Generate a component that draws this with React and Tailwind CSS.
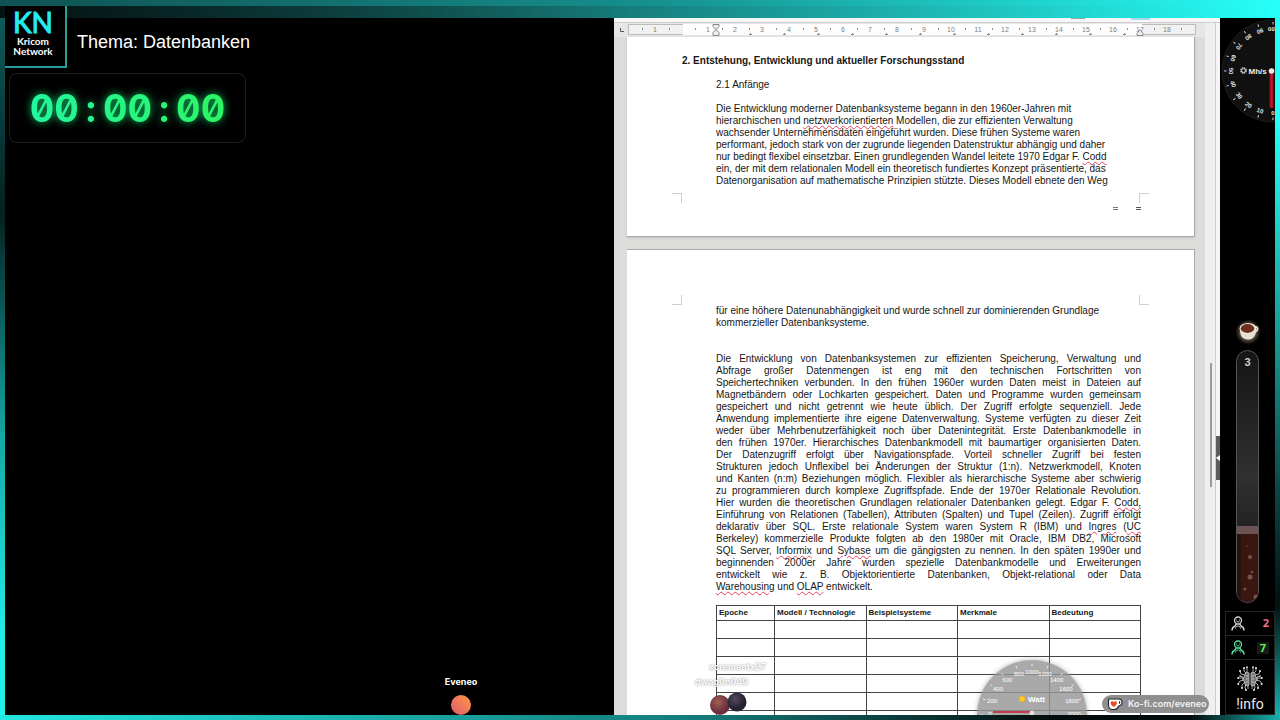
import React from "react";

const sans = "font-['Liberation_Sans',Arial,sans-serif]";

function Wavy({ children }) {
  return (
    <span className="underline decoration-[#e0405a] decoration-wavy decoration-1 underline-offset-1">{children}</span>
  );
}

function Ruler() {
  const numbers = Array.from({ length: 18 }, (_, i) => i + 1);
  const halves = Array.from({ length: 19 }, (_, i) => i);
  const tabs = Array.from({ length: 12 }, (_, i) => i + 1);
  return (
    <svg width="568" height="13" viewBox="0 0 568 13" className="block shrink-0" role="img" aria-label="Lineal">
      <rect x="0.5" y="1.5" width="567" height="10" fill="#f1f1f1" stroke="#bcbcbc" />
      <rect x="55" y="1" width="459" height="11" fill="#fdfdfd" />
      <g fill="#808080" fontFamily="Liberation Sans, sans-serif" fontSize="7" textAnchor="middle">
        <text x="27" y="9">1</text>
        {numbers.map((n) => (
          <text key={n} x={53 + n * 27} y="9">{n}</text>
        ))}
      </g>
      <g fill="#8c8c8c">
        <rect x="14" y="5" width="1" height="2" />
        <rect x="41" y="5" width="1" height="2" />
        {halves.map((n) => (
          <rect key={n} x={67 + n * 27} y="5" width="1" height="2" />
        ))}
        {tabs.map((n) => (
          <path key={n} d={`M${88 + n * 34 - 1} 12h3v-1h-1v-1h-1v1h-1z`} />
        ))}
      </g>
      <g fill="#eee" stroke="#888" strokeWidth="1">
        <path d="M85 1.5h6v2l-3 3-3-3zM85 12.500v-3l3-3 3 3v3z" />
        <path d="M509 12.500v-2l3-4 3 4v2z" />
      </g>
    </svg>
  );
}

const introLines = [
  "Die Entwicklung moderner Datenbanksysteme begann in den 1960er-Jahren mit",
  <>hierarchischen und <Wavy>netzwerkorientierten</Wavy> Modellen, die zur effizienten Verwaltung</>,
  "wachsender Unternehmensdaten eingeführt wurden. Diese frühen Systeme waren",
  "performant, jedoch stark von der zugrunde liegenden Datenstruktur abhängig und daher",
  <>nur bedingt flexibel einsetzbar. Einen grundlegenden Wandel leitete 1970 Edgar F. <Wavy>Codd</Wavy></>,
  "ein, der mit dem relationalen Modell ein theoretisch fundiertes Konzept präsentierte, das",
  "Datenorganisation auf mathematische Prinzipien stützte. Dieses Modell ebnete den Weg",
];

const bodyLines = [
  "Die Entwicklung von Datenbanksystemen zur effizienten Speicherung, Verwaltung und",
  "Abfrage großer Datenmengen ist eng mit den technischen Fortschritten von",
  "Speichertechniken verbunden. In den frühen 1960er wurden Daten meist in Dateien auf",
  "Magnetbändern oder Lochkarten gespeichert. Daten und Programme wurden gemeinsam",
  "gespeichert und nicht getrennt wie heute üblich. Der Zugriff erfolgte sequenziell. Jede",
  "Anwendung implementierte ihre eigene Datenverwaltung. Systeme verfügten zu dieser Zeit",
  "weder über Mehrbenutzerfähigkeit noch über Datenintegrität. Erste Datenbankmodelle in",
  "den frühen 1970er. Hierarchisches Datenbankmodell mit baumartiger organisierten Daten.",
  "Der Datenzugriff erfolgt über Navigationspfade. Vorteil schneller Zugriff bei festen",
  "Strukturen jedoch Unflexibel bei Änderungen der Struktur (1:n). Netzwerkmodell, Knoten",
  "und Kanten (n:m) Beziehungen möglich. Flexibler als hierarchische Systeme aber schwierig",
  "zu programmieren durch komplexe Zugriffspfade. Ende der 1970er Relationale Revolution.",
  <>Hier wurden die theoretischen Grundlagen relationaler Datenbanken gelegt. Edgar F. <Wavy>Codd,</Wavy></>,
  "Einführung von Relationen (Tabellen), Attributen (Spalten) und Tupel (Zeilen). Zugriff erfolgt",
  <>deklarativ über SQL. Erste relationale System waren System R (IBM) und <Wavy>Ingres</Wavy> (<Wavy>UC</Wavy></>,
  "Berkeley) kommerzielle Produkte folgten ab den 1980er mit Oracle, IBM DB2, Microsoft",
  <>SQL Server, <Wavy>Informix</Wavy> und <Wavy>Sybase</Wavy> um die gängigsten zu nennen. In den späten 1990er und</>,
  "beginnenden 2000er Jahre wurden spezielle Datenbankmodelle und Erweiterungen",
  "entwickelt wie z. B. Objektorientierte Datenbanken, Objekt-relational oder Data",
];

function Lines({ lines, justify }) {
  return lines.map((line, i) => (
    <span key={i} className={justify ? "block whitespace-nowrap [text-align-last:justify]" : "block whitespace-nowrap"}>
      {line}
    </span>
  ));
}

function PageOne() {
  return (
    <article className="h-[200px] shrink-0 border-r border-b border-[#a9a9a9] bg-white pt-[18px] text-[10px] leading-3 text-[#161616] shadow-sm">
      <h1 className="ml-[55px] font-bold whitespace-nowrap">2. Entstehung, Entwicklung und aktueller Forschungsstand</h1>
      <h2 className="mt-3 ml-[89px]">2.1 Anfänge</h2>
      <p className="mt-3 mr-[53px] ml-[89px]">
        <Lines lines={introLines} />
      </p>
      <div className="mt-[6px] flex justify-between px-[45px]">
        <span className="h-[10px] w-[10px] border-t border-r border-[#cfcfcf]" />
        <span className="h-[10px] w-[10px] border-t border-l border-[#cfcfcf]" />
      </div>
      <div className="mt-1 mr-[53px] flex justify-end gap-[18px]">
        <span className="h-[3px] w-[5px] border-y border-[#777]" />
        <span className="h-[3px] w-[5px] border-y border-[#555]" />
      </div>
    </article>
  );
}

function PageTwo() {
  return (
    <article className="min-h-0 flex-1 border-t border-r border-[#a9a9a9] bg-white pt-[45px] text-[10px] leading-3 text-[#161616]">
      <div className="flex justify-between px-[45px]">
        <span className="h-[10px] w-[10px] border-r border-b border-[#cfcfcf]" />
        <span className="h-[10px] w-[10px] border-b border-l border-[#cfcfcf]" />
      </div>
      <div className="mr-[53px] ml-[89px]">
        <p>
          <Lines
            lines={[
              "für eine höhere Datenunabhängigkeit und wurde schnell zur dominierenden Grundlage",
              "kommerzieller Datenbanksysteme.",
            ]}
          />
        </p>
        <p className="mt-6">
          <Lines lines={bodyLines} justify />
          <span className="block">
            <Wavy>Warehousing</Wavy> und <Wavy>OLAP</Wavy> entwickelt.
          </span>
        </p>
        <table className="mt-3 w-full table-fixed border-collapse text-left text-[8px] leading-3">
          <colgroup>
            <col className="w-[58px]" />
            <col />
            <col />
            <col />
            <col />
          </colgroup>
          <thead>
            <tr className="h-[15px]">
              {["Epoche", "Modell / Technologie", "Beispielsysteme", "Merkmale", "Bedeutung"].map((h) => (
                <th key={h} scope="col" className="border border-[#444] px-[2px] py-0 font-bold whitespace-nowrap">{h}</th>
              ))}
            </tr>
          </thead>
          <tbody>
            {[0, 1, 2, 3, 4, 5].map((r) => (
              <tr key={r} className="h-[18px]">
                {[0, 1, 2, 3, 4].map((c) => (
                  <td key={c} className="border border-[#444] p-0" />
                ))}
              </tr>
            ))}
          </tbody>
        </table>
      </div>
    </article>
  );
}

function WattGauge() {
  const labels = ["0", "200", "400", "600", "800", "1000", "1200", "1400", "1600", "1800", "2000"];
  return (
    <svg width="120" height="62" viewBox="0 0 120 62" className="absolute right-[128px] bottom-0" role="img" aria-label="Watt">
      <defs>
        <filter id="wattGlow" x="-10%" y="-10%" width="120%" height="120%">
          <feGaussianBlur stdDeviation="2" />
        </filter>
      </defs>
      <circle cx="60" cy="62" r="56" fill="#777" opacity="0.35" filter="url(#wattGlow)" />
      <circle cx="60" cy="62" r="55" fill="#9a9a9a" fillOpacity="0.72" />
      <g fill="#fff" fontFamily="Liberation Sans, sans-serif" fontSize="6" textAnchor="middle">
        {labels.map((l, i) => {
          const a = Math.PI - (i * Math.PI) / 10;
          return (
            <text key={l} x={60 + 42 * Math.cos(a)} y={62 - 42 * Math.sin(a) + 1}>{l}</text>
          );
        })}
      </g>
      <g stroke="#fff" strokeWidth="0.8">
        {labels.map((l, i) => {
          const a = Math.PI - (i * Math.PI) / 10;
          return (
            <line
              key={l}
              x1={60 + 49 * Math.cos(a)}
              y1={62 - 49 * Math.sin(a)}
              x2={60 + 51.5 * Math.cos(a)}
              y2={62 - 51.5 * Math.sin(a)}
            />
          );
        })}
      </g>
      <circle cx="50" cy="46" r="3" fill="#ffc928" stroke="#e8a21a" strokeWidth="0.6" />
      <text x="56" y="49" fill="#fff" fontFamily="Liberation Sans, sans-serif" fontSize="8" fontWeight="bold">Watt</text>
      <rect x="21" y="58" width="38" height="2" fill="#c04050" />
      <circle cx="60" cy="60" r="2.500" fill="#ddd" />
    </svg>
  );
}

function KofiBadge() {
  return (
    <a
      href="https://ko-fi.com/eveneo"
      className="absolute right-[11px] bottom-[2px] flex h-[18px] w-[107px] items-center gap-[5px] rounded-full bg-[#8f8f8f] pl-[5px] font-['Inter',sans-serif] text-[9px] font-semibold whitespace-nowrap text-[#f2f2f2]"
    >
      <svg width="16" height="14" viewBox="0 0 16 14" aria-hidden="true">
        <path d="M2 2h9.500c2 0 3.500 1.300 3.500 3.300S13.500 8.800 11.700 9C11 11 9.500 12.500 7 12.500H5.500C3 12.500 1.500 10.500 1.500 8V2.500z" fill="#fff" stroke="#222" strokeWidth="1.100" />
        <path d="M12 4.200c1 0 1.300.4 1.300 1.200S12.800 6.700 12 6.700z" fill="#222" />
        <path d="M6.800 10C4.800 8.500 3.700 7.400 3.700 6c0-1.900 2.300-2.300 3.100-.7.800-1.600 3.100-1.200 3.100.7 0 1.400-1.100 2.500-3.100 4z" fill="#f0452c" />
      </svg>
      Ko-fi.com/eveneo
    </a>
  );
}

function DocumentWindow() {
  return (
    <main className={`relative flex min-h-0 min-w-0 flex-col overflow-hidden bg-[#dcdcdb] ${sans}`}>
      <div className="flex h-[5px] shrink-0 justify-end gap-[46px] border-b border-[#cfcfcf] bg-[#f6f6f6] pr-[70px]">
        <span className="h-px w-[14px] bg-[#8fa9a9]" />
        <span className="h-[2px] w-[19px] bg-[#a8d8f4]" />
      </div>
      <div className="flex min-h-0 flex-1">
        <div className="flex min-h-0 min-w-0 flex-1 flex-col">
          <div className="flex h-[14px] shrink-0 items-start gap-1 overflow-hidden bg-[#e6e6e6] pl-[6px]">
            <svg width="4" height="13" viewBox="0 0 4 13" className="shrink-0" aria-hidden="true">
              <path d="M0.500 5v3.500H4" fill="none" stroke="#555" />
            </svg>
            <Ruler />
          </div>
          <div className="flex min-h-0 flex-1 flex-col gap-3 pr-[10px] pl-[13px]">
            <PageOne />
            <PageTwo />
          </div>
        </div>
        <div className="w-[10px] shrink-0 bg-[#efefef] pt-[340px] pl-[5px]">
          <div className="h-[124px] w-[2px] bg-[#9a9a9a]" />
        </div>
        <div className="w-[5px] shrink-0 border-l border-[#cccccc] bg-[#f5f5f5] pt-[413px]">
          <div className="flex h-11 items-center justify-center bg-[#5c5c5c]">
            <svg width="4" height="6" viewBox="0 0 4 6" aria-hidden="true">
              <path d="M4 0v6L0 3z" fill="#fff" />
            </svg>
          </div>
        </div>
      </div>

      <div className="absolute bottom-0 left-[81px] flex flex-col font-['Inter',sans-serif] text-[9px] leading-[15px] font-semibold text-white">
        <span className="pl-[14px] [text-shadow:0_0_2px_#777]">xcrementx27</span>
        <span className="[text-shadow:0_0_2px_#777]">dwag0n049</span>
        <svg width="56" height="26" viewBox="0 0 56 26" aria-hidden="true">
          <defs>
            <radialGradient id="ballRed" cx="40%" cy="35%">
              <stop offset="0" stopColor="#a0604f" />
              <stop offset="1" stopColor="#6b3040" />
            </radialGradient>
            <radialGradient id="ballDark" cx="40%" cy="35%">
              <stop offset="0" stopColor="#54485c" />
              <stop offset="1" stopColor="#26222f" />
            </radialGradient>
          </defs>
          <circle cx="25" cy="16" r="10" fill="url(#ballRed)" />
          <circle cx="42" cy="13" r="9.500" fill="url(#ballDark)" />
        </svg>
      </div>
      <WattGauge />
      <KofiBadge />
    </main>
  );
}

function HashGauge() {
  const labels = ["0", "10", "20", "30", "40", "50", "60", "70", "80", "90", "100"];
  return (
    <svg viewBox="0 0 55 110" className="block h-[110px] w-full shrink-0" preserveAspectRatio="xMaxYMin slice" role="img" aria-label="Mh/s">
      <circle cx="53" cy="53" r="51" fill="#101010" stroke="#1d1d1d" strokeWidth="1" />
      {labels.map((l, i) => (
        <g key={l} transform={`rotate(${i * 18} 53 53)`} fill="#e4e4e4">
          <text x="53" y="97" fontFamily="Liberation Sans, sans-serif" fontSize="6" fontWeight="bold" textAnchor="middle">{l}</text>
          <rect x="52.500" y="99.500" width="0.900" height="2.500" />
        </g>
      ))}
      <circle cx="23.500" cy="52.500" r="2.600" fill="none" stroke="#d8d8d8" strokeWidth="1.400" strokeDasharray="1.400 0.650" />
      <circle cx="23.500" cy="52.500" r="1.900" fill="none" stroke="#d8d8d8" strokeWidth="0.800" />
      <text x="28.500" y="55.500" fill="#eee" fontFamily="Liberation Sans, sans-serif" fontSize="8" fontWeight="bold">Mh/s</text>
      <rect x="49.500" y="53" width="4" height="37" rx="1" fill="#8e0c1c" />
      <rect x="50.500" y="53" width="2" height="37" fill="#c4152a" />
      <circle cx="51.500" cy="53" r="2.800" fill="#e8e8e8" />
    </svg>
  );
}

function Cup() {
  return (
    <svg width="26" height="26" viewBox="0 0 26 26" className="mx-auto block overflow-visible" aria-hidden="true">
      <defs>
        <radialGradient id="cupGlow">
          <stop offset="0.500" stopColor="#b9a88c" stopOpacity="0.700" />
          <stop offset="1" stopColor="#6b5c42" stopOpacity="0" />
        </radialGradient>
      </defs>
      <circle cx="13" cy="14" r="13" fill="url(#cupGlow)" />
      <path d="M5 11c0 5 1 10.500 8.500 10.500 5 0 7.500-4.500 8-10.500z" fill="#e6dfd6" />
      <path d="M19.500 9c4-1.500 4.500 4 0 5" fill="none" stroke="#e9e0d6" strokeWidth="1.600" />
      <ellipse cx="13" cy="10.500" rx="8.500" ry="5.500" fill="#ece5dc" />
      <ellipse cx="12.500" cy="10.500" rx="6.800" ry="4.400" fill="#6d2f1c" />
    </svg>
  );
}

function Tube() {
  return (
    <div className="mx-auto flex h-[253px] w-[23px] flex-col overflow-hidden rounded-full border border-[#555] bg-linear-to-b from-[#151515] via-[#303030] to-[#111]">
      <span className="pt-[5px] text-center font-['Liberation_Sans',Arial,sans-serif] text-[11px] leading-3 font-bold text-[#d8d0c0]">3</span>
      <svg viewBox="0 0 21 76" className="mt-auto block w-full shrink-0" aria-hidden="true">
        <rect width="21" height="76" fill="#3a1610" />
        <rect x="0" width="4" height="76" fill="#28110c" />
        <rect width="21" height="8" fill="#6c5454" />
        <g fill="#7a5248">
          <circle cx="13" cy="31" r="2" />
          <circle cx="15" cy="46" r="1.300" />
          <circle cx="13" cy="51" r="2.500" />
          <circle cx="8" cy="63" r="1.500" />
          <circle cx="10" cy="20" r="1" opacity="0.500" />
          <circle cx="19" cy="71" r="2.500" />
        </g>
      </svg>
    </div>
  );
}

function Person({ color }) {
  return (
    <svg width="14" height="15" viewBox="0 0 14 15" fill="none" stroke={color} aria-hidden="true">
      <circle cx="7" cy="4.500" r="3.500" strokeWidth="1.300" />
      <path d="M5 4h1M8 4h1M5.500 5.800h3" strokeWidth="1" />
      <path d="M1 14.500c0-2 .8-3.500 3-4.500l1.500-2M13 14.500c0-2-.8-3.500-3-4.500L8.500 8" strokeWidth="1.400" />
      <path d="M4.500 12.500C5 10.500 6 10 7 10s2 .5 2.500 2.500" strokeWidth="1" />
    </svg>
  );
}

function Circuit() {
  const half = (
    <>
      <path d="M12 7C9 5 7 8 8 10c-3 1-3 5 0 6-1 3 2 5 4 3z" fill="#777" stroke="#d0d0d0" strokeWidth="0.800" />
      <path d="M9 7L7 5V2M10 6V1M8 9L4 8 3 5M7 12H1M7 14l-4 1-2 3M8 16l-3 3v3M9 18l-1 3 1 3M11 19v4M6 11L3 10" fill="none" stroke="#d4d4d4" strokeWidth="0.800" />
      <path d="M9 10h2M9 13h2M9 16h2" stroke="#eee" strokeWidth="0.600" />
      <g fill="#e8e8e8">
        <circle cx="7" cy="2" r="1" />
        <circle cx="10" cy="1.200" r="0.900" />
        <circle cx="3" cy="5" r="1" />
        <circle cx="1.200" cy="12" r="1" />
        <circle cx="1.300" cy="18" r="1" />
        <circle cx="5" cy="22" r="1" />
        <circle cx="9" cy="24" r="1" />
        <circle cx="3" cy="10" r="0.800" />
      </g>
    </>
  );
  return (
    <svg width="26" height="26" viewBox="0 0 26 26" aria-hidden="true">
      {half}
      <g transform="translate(26 0) scale(-1 1)">{half}</g>
    </svg>
  );
}

function Sidebar() {
  return (
    <aside className="flex min-h-0 flex-col bg-black">
      <HashGauge />
      <div className="mt-[190px]">
        <Cup />
      </div>
      <div className="mt-[6px]">
        <Tube />
      </div>
      <div className="mt-2 ml-[5px] flex min-h-0 flex-1 flex-col border border-[#262626]">
        <div className="flex h-6 items-center justify-between border-b border-[#262626] pr-[5px] pl-[5px] font-['Open_Sans',sans-serif] text-[11px] font-bold text-[#f0708c]">
          <Person color="#d8d0d4" />
          <span>2</span>
        </div>
        <div className="flex h-6 items-center justify-between border-b border-[#262626] pr-[5px] pl-[5px] font-['Open_Sans',sans-serif] text-[11px] font-bold text-[#5cf04a]">
          <Person color="#5fe0a0" />
          <span className="bg-[#1a1a1a] px-[3px] leading-3">7</span>
        </div>
        <div className="flex flex-1 flex-col items-center justify-end gap-[2px] font-['Roboto',sans-serif] text-[14px] leading-5 text-[#ececec]">
          <Circuit />
          <span>!info</span>
        </div>
      </div>
    </aside>
  );
}

function Stage() {
  return (
    <section className={`flex min-h-0 min-w-0 flex-col bg-black text-white ${sans}`}>
      <header className="z-10 -mt-3 flex items-start gap-[10px]">
        <div className="flex h-[62px] w-[62px] shrink-0 flex-col items-center border-r-2 border-b-2 border-[#2a9c9c] bg-black pt-[2px] pr-1 font-['Lato',sans-serif]">
          <span className="text-[28px] leading-7 text-[#22ecf2] [-webkit-text-stroke:1px_#22ecf2]">KN</span>
          <span className="text-[10px] leading-[10px] font-bold">Kricom</span>
          <span className="text-[10px] leading-[10px] font-bold">Network</span>
        </div>
        <p className="pt-6 text-[18px] leading-6 whitespace-nowrap">Thema: Datenbanken</p>
      </header>
      <div className="mt-[5px] ml-1 flex h-[70px] w-[237px] items-center justify-center rounded-lg border border-[#1e1e1e]">
        <time className="bg-linear-to-r from-[#22f79c] to-[#2cf562] bg-clip-text font-['Inter',sans-serif] text-[38px] leading-[48px] font-bold text-transparent tabular-nums slashed-zero [filter:drop-shadow(0_0_4px_#0fbf60)]">
          00<span className="inline-block w-6 text-center">:</span>00<span className="inline-block w-6 text-center">:</span>00
        </time>
      </div>
      <div className="mt-auto flex flex-col items-center gap-[6px] pl-[303px] font-['Inter',sans-serif] text-[9px] leading-[15px] font-bold">
        Eveneo
        <svg width="20" height="20" viewBox="0 0 20 20" aria-hidden="true">
          <defs>
            <linearGradient id="ballOrange" x1="0" y1="1" x2="1" y2="0">
              <stop offset="0" stopColor="#e0586a" />
              <stop offset="1" stopColor="#ff9a48" />
            </linearGradient>
          </defs>
          <circle cx="10" cy="10" r="10" fill="url(#ballOrange)" />
        </svg>
      </div>
    </section>
  );
}

export default function App() {
  return (
    <div className="grid h-screen min-h-[640px] grid-cols-[5px_609fr_606fr_55px_5px] grid-rows-[18px_minmax(0,1fr)_5px] overflow-hidden bg-black">
      <div className="col-span-5 bg-linear-to-r from-[#0d3a3a] via-[#16807e] to-[#26fff8]">
        <div className="h-[6px] bg-linear-to-r from-[#0f5252] via-[#158f8d] to-[#26fff8]" />
        <div className="h-3 w-1/2 bg-linear-to-r from-black/70 to-transparent" />
      </div>
      <div className="bg-[linear-gradient(to_bottom,#0f5a5a_0%,#052020_28%,#14a8a4_60%,#22f0ea_90%)]" />
      <Stage />
      <DocumentWindow />
      <Sidebar />
      <div className="bg-[linear-gradient(to_bottom,#26fff8_15%,#189c96_45%,#0b3d3c_70%,#021010_84%,#17b0ac_100%)]" />
      <div className="col-span-5 bg-[linear-gradient(to_right,#22e6e0_0%,#137a78_55%,#020c0c_82%,#020c0c_93%,#17b0ac_100%)]" />
    </div>
  );
}
